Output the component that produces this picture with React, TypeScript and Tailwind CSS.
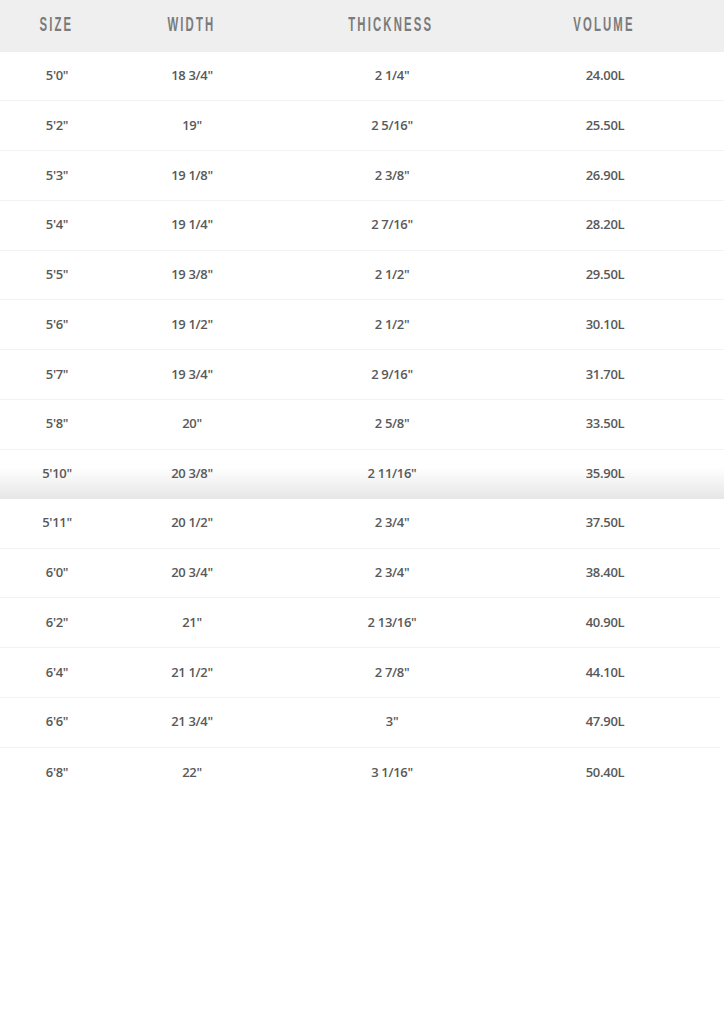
const cols = "grid grid-cols-[112px_158px_242px_184px] items-center text-center";

const topRows = [
  ["5'0\"", "18 3/4\"", "2 1/4\"", "24.00L"],
  ["5'2\"", "19\"", "2 5/16\"", "25.50L"],
  ["5'3\"", "19 1/8\"", "2 3/8\"", "26.90L"],
  ["5'4\"", "19 1/4\"", "2 7/16\"", "28.20L"],
  ["5'5\"", "19 3/8\"", "2 1/2\"", "29.50L"],
  ["5'6\"", "19 1/2\"", "2 1/2\"", "30.10L"],
  ["5'7\"", "19 3/4\"", "2 9/16\"", "31.70L"],
  ["5'8\"", "20\"", "2 5/8\"", "33.50L"],
];

const bottomRows = [
  ["5'11\"", "20 1/2\"", "2 3/4\"", "37.50L"],
  ["6'0\"", "20 3/4\"", "2 3/4\"", "38.40L"],
  ["6'2\"", "21\"", "2 13/16\"", "40.90L"],
  ["6'4\"", "21 1/2\"", "2 7/8\"", "44.10L"],
  ["6'6\"", "21 3/4\"", "3\"", "47.90L"],
  ["6'8\"", "22\"", "3 1/16\"", "50.40L"],
];

const Cells = ({ row }: { row: string[] }) => (
  <>
    {row.map((v, i) => (
      <div key={i} className="pl-[2px]">{v}</div>
    ))}
  </>
);

const Head = ({ label }: { label: string }) => (
  <div className="flex justify-center">
    <span className="inline-block scale-x-[0.54] text-[21px] font-bold tracking-[4px] text-[#7b7b7b] font-['Liberation_Sans',sans-serif] whitespace-nowrap">
      {label}
    </span>
  </div>
);

export default function App() {
  return (
    <div className="w-[724px] h-[1024px] bg-white font-['Open_Sans',sans-serif] text-[13px] font-semibold tracking-[-0.3px] text-[#595959]">
      {/* header */}
      <div className={`${cols} h-[51.5px] pb-[4px] bg-[#efefef]`}>
        <Head label="SIZE" />
        <Head label="WIDTH" />
        <Head label="THICKNESS" />
        <Head label="VOLUME" />
      </div>

      {/* first half of the chart */}
      {topRows.map((r) => (
        <div key={r[0]} className={`${cols} h-[49.75px] border-b border-[#f2f2f2]`}>
          <Cells row={r} />
        </div>
      ))}
      <div className={`${cols} h-[49.25px] bg-gradient-to-b from-white from-35% to-[#e6e6e6]`}>
        <Cells row={["5'10\"", "20 3/8\"", "2 11/16\"", "35.90L"]} />
      </div>

      {/* second half */}
      <div className="w-[720px]">
        {bottomRows.map((r, i) => (
          <div
            key={r[0]}
            className={`${cols} h-[49.75px] ${i < bottomRows.length - 1 ? "border-b border-[#f2f2f2]" : ""}`}
          >
            <Cells row={r} />
          </div>
        ))}
      </div>
    </div>
  );
}
